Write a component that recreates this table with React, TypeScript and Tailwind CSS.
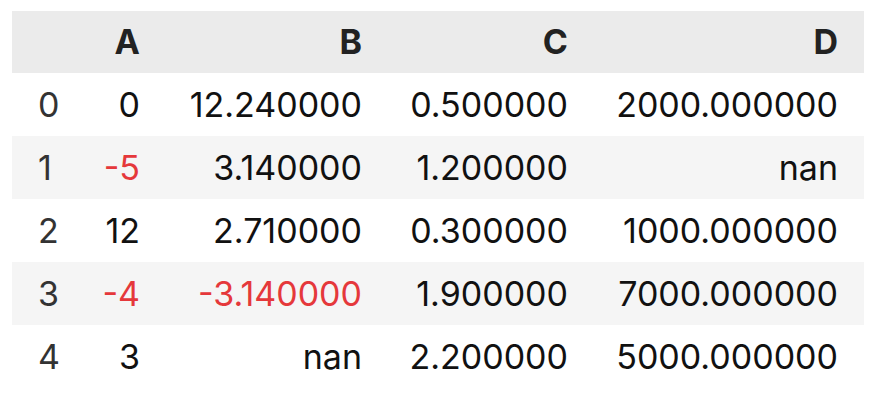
const columns = ["A", "B", "C", "D"];

type Cell = { v: string; neg?: boolean };

const rows: Cell[][] = [
  [{ v: "0" }, { v: "12.240000" }, { v: "0.500000" }, { v: "2000.000000" }],
  [{ v: "-5", neg: true }, { v: "3.140000" }, { v: "1.200000" }, { v: "nan" }],
  [{ v: "12" }, { v: "2.710000" }, { v: "0.300000" }, { v: "1000.000000" }],
  [{ v: "-4", neg: true }, { v: "-3.140000", neg: true }, { v: "1.900000" }, { v: "7000.000000" }],
  [{ v: "3" }, { v: "nan" }, { v: "2.200000" }, { v: "5000.000000" }],
];

const grid = "grid grid-cols-[70px_84px_222px_206px_270px] items-center";

export default function App() {
  return (
    <div
      className="h-[416px] w-[876px] bg-white px-[12px] pt-[11px] text-[34px] leading-none"
      style={{ fontFamily: "Inter, 'Liberation Sans', sans-serif" }}
    >
      {/* header */}
      <div className={`${grid} h-[62px] bg-[#ebebeb] font-bold text-[#222]`}>
        <div />
        {columns.map((c) => (
          <div key={c} className="pr-[26px] text-right">
            {c}
          </div>
        ))}
      </div>

      {/* body */}
      {rows.map((row, i) => (
        <div
          key={i}
          className={`${grid} h-[63px] ${i % 2 === 1 ? "bg-[#f5f5f5]" : "bg-white"}`}
        >
          <div className="pl-[26px] text-[#333]">{i}</div>
          {row.map((cell, j) => (
            <div
              key={j}
              className={`pr-[26px] text-right ${cell.neg ? "text-[#e5383b]" : "text-[#111]"}`}
            >
              {cell.v}
            </div>
          ))}
        </div>
      ))}
    </div>
  );
}
